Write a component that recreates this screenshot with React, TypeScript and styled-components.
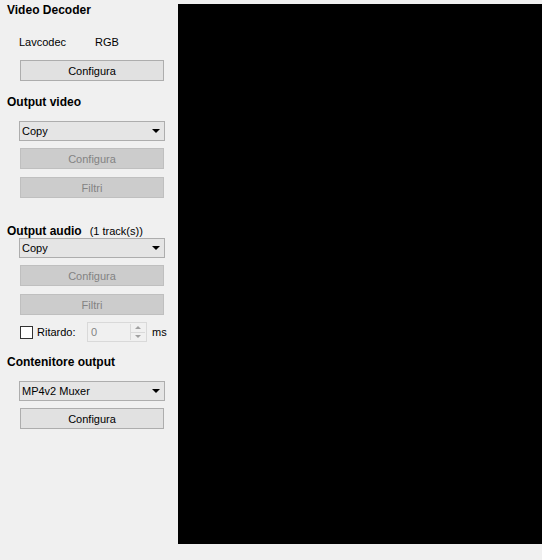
import React from 'react';
import styled, { createGlobalStyle } from 'styled-components';

const GlobalStyle = createGlobalStyle`
  html, body {
    margin: 0;
    padding: 0;
    background: #f0f0f0;
  }
  body {
    font-family: Tahoma, "Liberation Sans", Arial, sans-serif;
    font-size: 11px;
    color: #000;
  }
`;

const Window = styled.div`
  display: flex;
  width: 542px;
  height: 560px;
  background: #f0f0f0;
  overflow: hidden;
`;

const Sidebar = styled.div`
  width: 178px;
  flex: none;
  display: flex;
  flex-direction: column;
  padding: 3px 0 0 7px;
  box-sizing: border-box;
`;

const Preview = styled.div`
  flex: 1;
  margin: 4px 0 16px 0;
  background: #000;
`;

const Title = styled.div<{ $top?: number }>`
  margin-top: ${({ $top }) => $top ?? 0}px;
  height: 14px;
  line-height: 14px;
  font-size: 12px;
  font-weight: bold;
  white-space: nowrap;
`;

const Note = styled.span`
  font-size: 11px;
  font-weight: normal;
  margin-left: 8px;
`;

const InfoRow = styled.div`
  margin-top: 18px;
  padding-left: 12px;
  height: 14px;
  line-height: 14px;
  display: grid;
  grid-template-columns: 76px auto;
`;

const Button = styled.button<{ $top?: number }>`
  margin: ${({ $top }) => $top ?? 0}px 0 0 13px;
  width: 144px;
  height: 21px;
  padding: 0;
  box-sizing: border-box;
  border: 1px solid #adadad;
  background: #e1e1e1;
  font: inherit;
  color: #000;
  &:disabled {
    border-color: #bfbfbf;
    background: #cccccc;
    color: #838383;
  }
`;

const Combo = styled.div<{ $top?: number }>`
  margin: ${({ $top }) => $top ?? 0}px 0 0 12px;
  width: 146px;
  height: 20px;
  box-sizing: border-box;
  border: 1px solid #adadad;
  background: #e5e5e5;
  display: flex;
  align-items: center;
  justify-content: space-between;
  padding: 0 4px 0 2px;
`;

const Arrow = styled.span`
  width: 0;
  height: 0;
  border-left: 4px solid transparent;
  border-right: 4px solid transparent;
  border-top: 4px solid #000;
`;

const DelayRow = styled.div`
  margin: 7px 0 0 13px;
  height: 20px;
  display: flex;
  align-items: center;
`;

const Check = styled.span`
  width: 13px;
  height: 13px;
  box-sizing: border-box;
  border: 1px solid #333;
  background: #fff;
  flex: none;
`;

const CheckLabel = styled.span`
  margin-left: 4px;
  width: 50px;
`;

const Spin = styled.div`
  width: 60px;
  height: 20px;
  box-sizing: border-box;
  border: 1px solid #d9d9d9;
  background: #f0f0f0;
  display: flex;
  align-items: center;
  color: #838383;
  padding-left: 3px;
`;

const SpinValue = styled.span`
  flex: 1;
`;

const SpinArrows = styled.div`
  width: 14px;
  height: 16px;
  display: flex;
  flex-direction: column;
  border-left: 1px solid #d9d9d9;
  margin-right: 1px;
`;

const SpinHalf = styled.div<{ $up?: boolean }>`
  flex: 1;
  display: flex;
  align-items: center;
  justify-content: center;
  border-bottom: ${({ $up }) => ($up ? '1px solid #d9d9d9' : 'none')};
  &::after {
    content: '';
    border-left: 3px solid transparent;
    border-right: 3px solid transparent;
    ${({ $up }) => ($up ? 'border-bottom: 3px solid #a0a0a0;' : 'border-top: 3px solid #a0a0a0;')}
  }
`;

const Unit = styled.span`
  margin-left: 5px;
`;

export default function App() {
  return (
    <>
      <GlobalStyle />
      <Window>
        <Sidebar>
          <Title>Video Decoder</Title>
          <InfoRow>
            <span>Lavcodec</span>
            <span>RGB</span>
          </InfoRow>
          <Button $top={11}>Configura</Button>

          <Title $top={14}>Output video</Title>
          <Combo $top={12}>
            <span>Copy</span>
            <Arrow />
          </Combo>
          <Button $top={7} disabled>Configura</Button>
          <Button $top={8} disabled>Filtri</Button>

          <Title $top={26}>
            Output audio<Note>(1 track(s))</Note>
          </Title>
          <Combo $top={0}>
            <span>Copy</span>
            <Arrow />
          </Combo>
          <Button $top={7} disabled>Configura</Button>
          <Button $top={8} disabled>Filtri</Button>
          <DelayRow>
            <Check />
            <CheckLabel>Ritardo:</CheckLabel>
            <Spin>
              <SpinValue>0</SpinValue>
              <SpinArrows>
                <SpinHalf $up />
                <SpinHalf />
              </SpinArrows>
            </Spin>
            <Unit>ms</Unit>
          </DelayRow>

          <Title $top={13}>Contenitore output</Title>
          <Combo $top={12}>
            <span>MP4v2 Muxer</span>
            <Arrow />
          </Combo>
          <Button $top={7}>Configura</Button>
        </Sidebar>
        <Preview />
      </Window>
    </>
  );
}
